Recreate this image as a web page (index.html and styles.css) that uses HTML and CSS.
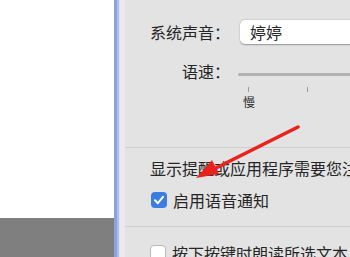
FILE: index.html
```html
<!DOCTYPE html>
<html lang="zh-CN">
<head>
<meta charset="utf-8">
<link rel="stylesheet" href="styles.css">
</head>
<body>
<div class="left">
  <div class="left-top"></div>
  <div class="left-bottom"></div>
</div>
<div class="edge">
  <div class="edge-dark"></div>
  <div class="edge-mid"></div>
  <div class="edge-light"></div>
  <div class="edge-pale"></div>
</div>
<div class="panel">
  <div class="form">
    <div class="label">系统声音<span class="colon">：</span></div>
    <div class="select">婷婷</div>
    <div class="label">语速<span class="colon">：</span></div>
    <div class="slider">
      <div class="track"></div>
      <div class="ticks">
        <div class="tick"></div>
        <div class="tick"></div>
      </div>
      <div class="slow">慢</div>
    </div>
  </div>
  <div class="sep sep-first"></div>
  <div class="note">显示提醒或应用程序需要您注意时朗读</div>
  <div class="check-row">
    <span class="box checked">
      <svg width="16" height="16" viewBox="0 0 16 16"><path d="M4 8.3 L6.9 11.2 L12 4.8" fill="none" stroke="#fff" stroke-width="2" stroke-linecap="round" stroke-linejoin="round"/></svg>
    </span>
    <span class="check-text">启用语音通知</span>
  </div>
  <div class="sep sep-second"></div>
  <div class="check-row row-last">
    <span class="box"></span>
    <span class="check-text">按下按键时朗读所选文本</span>
  </div>
</div>
<svg class="arrow" width="350" height="257" viewBox="0 0 350 257">
  <line x1="298" y1="127" x2="212" y2="170" stroke="#e8231d" stroke-width="3.5" stroke-linecap="round"/>
  <polygon points="196,178 219,174 212,160" fill="#e8231d"/>
</svg>
</body>
</html>
```

FILE: styles.css
```css
html, body {
  margin: 0;
  padding: 0;
}
body {
  width: 350px;
  height: 257px;
  overflow: hidden;
  display: flex;
  position: relative;
  font-family: "Noto Sans CJK SC", "Noto Sans", sans-serif;
  color: #262626;
}
.left {
  width: 114px;
  display: flex;
  flex-direction: column;
}
.left-top {
  height: 218px;
  background: #ffffff;
}
.left-bottom {
  flex: 1;
  background: #7f7f7f;
}
.edge {
  display: flex;
}
.edge-dark { width: 3px; background: #8da2dc; }
.edge-mid { width: 2px; background: #a9bfee; }
.edge-light { width: 1px; background: #dce4f4; }
.edge-pale { width: 5px; background: #ede7ee; }
.panel {
  flex: 1;
  background: #e3e3e3;
  padding-top: 20px;
  min-width: 0;
  overflow: hidden;
}
.form {
  display: grid;
  grid-template-columns: 80px 140px;
  column-gap: 9px;
  row-gap: 15px;
  padding-left: 25px;
}
.label {
  font-size: 16px;
  line-height: 24px;
  text-align: right;
  white-space: nowrap;
}
.colon {
  font-family: "Noto Sans CJK TC", sans-serif;
}
.select {
  height: 24px;
  background: #ffffff;
  border-radius: 5px;
  box-shadow: 0 0.5px 1.5px rgba(0,0,0,0.35);
  font-size: 16px;
  line-height: 24px;
  padding-left: 10px;
  margin-left: 1px;
  width: 200px;
  white-space: nowrap;
}
.slider {
  position: relative;
}
.track {
  margin-top: 14px;
  height: 3px;
  margin-left: -1px;
  width: 200px;
  background: #b2b2b2;
  border-radius: 1.5px;
}
.ticks {
  display: flex;
  gap: 58px;
  margin-top: 11px;
  padding-left: 9px;
}
.tick {
  width: 1px;
  height: 5px;
  background: #9a9a9a;
}
.slow {
  font-size: 12px;
  line-height: 14px;
  margin-top: 3px;
  padding-left: 4px;
}
.sep {
  height: 1px;
  background: #cfcfcf;
}
.sep-first {
  margin-top: 38px;
}
.note {
  margin-top: 10px;
  padding-left: 25px;
  font-size: 16px;
  line-height: 20px;
  white-space: nowrap;
}
.check-row {
  display: flex;
  align-items: center;
  gap: 6px;
  padding-left: 26px;
  margin-top: 13px;
  height: 18px;
  white-space: nowrap;
}
.box {
  width: 16px;
  height: 16px;
  box-sizing: border-box;
  border-radius: 4px;
  background: #ffffff;
  border: 1px solid #b8b8b8;
  display: flex;
  flex-shrink: 0;
}
.box.checked {
  background: #3a7ce2;
  border: none;
}
.check-text {
  font-size: 16px;
  line-height: 18px;
}
.sep-second {
  margin-top: 17px;
}
.row-last {
  margin-top: 17px;
  padding-left: 25px;
}
.arrow {
  position: absolute;
  left: 0;
  top: 0;
  pointer-events: none;
}
```
